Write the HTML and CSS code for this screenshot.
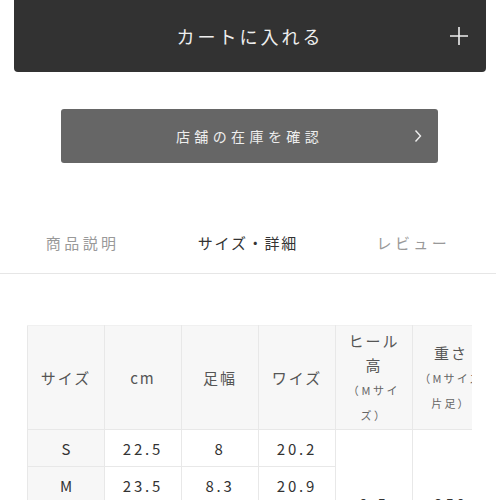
FILE: index.html
```html
<!DOCTYPE html>
<html lang="ja">
<head>
<meta charset="utf-8">
<link rel="stylesheet" href="styles.css">
</head>
<body>
<div class="page">
  <div class="cart-wrap">
    <button class="cart-btn">
      <span class="cart-label">カートに入れる</span>
      <svg class="plus" width="20" height="20" viewBox="0 0 20 20"><path d="M10 1v18M1 10h18" stroke="#eee" stroke-width="1.6" fill="none"/></svg>
    </button>
  </div>
  <div class="store-wrap">
    <button class="store-btn">
      <span class="store-label">店舗の在庫を確認</span>
      <svg class="chev" width="8" height="14" viewBox="0 0 8 14"><path d="M1.5 1.5l5 5.5-5 5.5" stroke="#eee" stroke-width="1.4" fill="none"/></svg>
    </button>
  </div>
  <nav class="tabs">
    <div class="tab">商品説明</div>
    <div class="tab active">サイズ・詳細</div>
    <div class="tab">レビュー</div>
  </nav>
  <div class="table-scroll">
    <table class="size-table">
      <colgroup>
        <col class="c"><col class="c"><col class="c"><col class="c"><col class="c"><col class="c">
      </colgroup>
      <tr class="head">
        <th>サイズ</th>
        <th>cm</th>
        <th>足幅</th>
        <th>ワイズ</th>
        <th>ヒール<br>高<br><small>（Mサイズ）</small></th>
        <th class="wide">重さ<br><small>（Mサイズ片足）</small></th>
      </tr>
      <tr>
        <td class="first">S</td>
        <td>22.5</td>
        <td>8</td>
        <td>20.2</td>
        <td rowspan="4" class="merged">9.5</td>
        <td rowspan="4" class="merged">250</td>
      </tr>
      <tr>
        <td class="first">M</td>
        <td>23.5</td>
        <td>8.3</td>
        <td>20.9</td>
      </tr>
      <tr>
        <td class="first">L</td>
        <td>24.5</td>
        <td>8.6</td>
        <td>21.6</td>
      </tr>
      <tr>
        <td class="first">LL</td>
        <td>25.5</td>
        <td>8.9</td>
        <td>22.3</td>
      </tr>
    </table>
  </div>
</div>
</body>
</html>
```

FILE: styles.css
```css
html, body {
  margin: 0;
  padding: 0;
  background: #fff;
}
body {
  font-family: "Noto Sans CJK JP", "Noto Sans", sans-serif;
  color: #333;
}
.page {
  width: 500px;
  overflow: hidden;
}
.cart-wrap {
  padding: 0 14px 0 14px;
}
.cart-btn {
  position: relative;
  display: flex;
  align-items: center;
  justify-content: center;
  width: 100%;
  height: 72px;
  border: none;
  border-radius: 0 0 4px 4px;
  background: #323232;
  color: #eee;
  font-family: inherit;
  font-size: 18px;
  letter-spacing: 3px;
  padding: 0;
}
.plus {
  position: absolute;
  right: 17px;
  top: 26px;
}
.store-wrap {
  padding: 37px 62px 0 61px;
}
.store-btn {
  position: relative;
  display: flex;
  align-items: center;
  justify-content: center;
  width: 100%;
  height: 54px;
  border: none;
  border-radius: 3px;
  background: #666;
  color: #eee;
  font-family: inherit;
  font-size: 14px;
  letter-spacing: 4.4px;
  padding: 0;
}
.chev {
  position: absolute;
  right: 16px;
  top: 20px;
}
.tabs {
  display: grid;
  grid-template-columns: repeat(3, 1fr);
  width: 496px;
  margin-top: 48px;
  border-bottom: 1px solid #e6e6e6;
}
.tab {
  height: 62px;
  display: flex;
  align-items: center;
  justify-content: center;
  font-size: 15px;
  letter-spacing: 3.4px;
  color: #999;
}
.tab.active {
  color: #333;
  letter-spacing: 1.8px;
}
.table-scroll {
  margin: 51px 0 0 27px;
  width: 445px;
  overflow: hidden;
}
.size-table {
  border-collapse: collapse;
  table-layout: fixed;
  width: 462px;
}
.size-table col.c {
  width: 77px;
}
.size-table th,
.size-table td {
  border: 1px solid #e8e8e8;
  text-align: center;
  font-weight: normal;
  padding: 0 2px;
}
.size-table tr.head th {
  height: 103px;
  background: #f7f7f7;
  color: #555;
  font-size: 15px;
  line-height: 24px;
  letter-spacing: 2px;
  border-top-color: #f0f0f0;
}
.size-table th small {
  font-size: 11px;
  line-height: 24px;
  letter-spacing: 2.6px;
  color: #666;
}
.size-table th.wide {
  padding: 0;
}
.size-table th.wide small {
  letter-spacing: 2.2px;
}
.size-table td {
  height: 36px;
  font-size: 15px;
  color: #333;
  letter-spacing: 2.8px;
  background: #fff;
}
.size-table td.first {
  background: #f7f7f7;
  letter-spacing: 0;
}
.size-table td.merged {
  vertical-align: middle;
}
```
